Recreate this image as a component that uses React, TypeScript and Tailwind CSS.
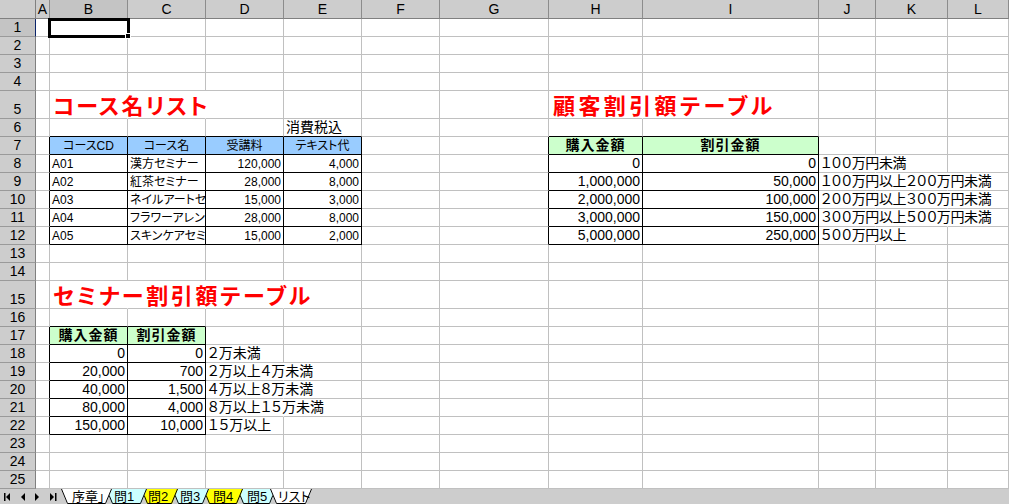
import React from "react";

type Kind = "title" | "title2" | "title3" | "small" | "smallhdr" | "norm" | "desc" | "bhdr";
type Cell = { t: string; a: "l" | "r" | "c"; k: Kind };

const LETTERS = ["", "A", "B", "C", "D", "E", "F", "G", "H", "I", "J", "K", "L"];
const ROW_COUNT = 25;

const data: Record<string, Cell> = {};
function put(r: number, c: number, t: string, a: "l" | "r" | "c", k: Kind) {
  data[`${r},${c}`] = { t, a, k };
}

put(5, 2, "コース名リスト", "l", "title");
put(5, 8, "顧客割引額テーブル", "l", "title2");
put(6, 5, "消費税込", "l", "norm");
put(7, 2, "コースCD", "c", "smallhdr");
put(7, 3, "コース名", "c", "smallhdr");
put(7, 4, "受講料", "c", "smallhdr");
put(7, 5, "テキスト代", "c", "smallhdr");
put(7, 8, "購入金額", "c", "bhdr");
put(7, 9, "割引金額", "c", "bhdr");

const courses = [
  ["A01", "漢方セミナー", "120,000", "4,000"],
  ["A02", "紅茶セミナー", "28,000", "8,000"],
  ["A03", "ネイルアートセ", "15,000", "3,000"],
  ["A04", "フラワーアレン", "28,000", "8,000"],
  ["A05", "スキンケアセミ", "15,000", "2,000"],
];
courses.forEach((row, i) => {
  put(8 + i, 2, row[0], "l", "small");
  put(8 + i, 3, row[1], "l", "small");
  put(8 + i, 4, row[2], "r", "small");
  put(8 + i, 5, row[3], "r", "small");
});

const customer = [
  ["0", "0", "１００万円未満"],
  ["1,000,000", "50,000", "１００万円以上２００万円未満"],
  ["2,000,000", "100,000", "２００万円以上３００万円未満"],
  ["3,000,000", "150,000", "３００万円以上５００万円未満"],
  ["5,000,000", "250,000", "５００万円以上"],
];
customer.forEach((row, i) => {
  put(8 + i, 8, row[0], "r", "norm");
  put(8 + i, 9, row[1], "r", "norm");
  put(8 + i, 10, row[2], "l", "desc");
});

put(15, 2, "セミナー割引額テーブル", "l", "title3");
put(17, 2, "購入金額", "c", "bhdr");
put(17, 3, "割引金額", "c", "bhdr");
const seminar = [
  ["0", "0", "２万未満"],
  ["20,000", "700", "２万以上４万未満"],
  ["40,000", "1,500", "４万以上８万未満"],
  ["80,000", "4,000", "８万以上１５万未満"],
  ["150,000", "10,000", "１５万以上"],
];
seminar.forEach((row, i) => {
  put(18 + i, 2, row[0], "r", "norm");
  put(18 + i, 3, row[1], "r", "norm");
  put(18 + i, 4, row[2], "l", "norm");
});

const tables: [number, number, number, number][] = [
  [7, 12, 2, 5],
  [7, 12, 8, 9],
  [17, 22, 2, 3],
];
const inT = (r: number, c: number) =>
  tables.some(([r0, r1, c0, c1]) => r >= r0 && r <= r1 && c >= c0 && c <= c1);

const hidden = new Set([
  "5,2", "5,3", "5,8",
  "8,10", "9,10", "9,11", "10,10", "10,11", "11,10", "11,11", "12,10",
  "15,2", "15,3", "15,4",
  "19,4", "20,4", "21,4",
]);

const clipped = new Set(["10,3", "11,3", "12,3"]);

function bgOf(r: number, c: number) {
  if (r === 7 && c >= 2 && c <= 5) return "bg-[#99ccff]";
  if ((r === 7 && (c === 8 || c === 9)) || (r === 17 && (c === 2 || c === 3))) return "bg-[#ccffcc]";
  return "";
}

function kindClass(k: Kind) {
  switch (k) {
    case "title":
      return "pl-[1px] text-[22px] leading-[22px] font-bold text-[#ff0000] tracking-[2px]";
    case "title2":
      return "pl-[2px] text-[22px] leading-[22px] font-bold text-[#ff0000] tracking-[3.4px]";
    case "title3":
      return "pl-[1px] text-[22px] leading-[22px] font-bold text-[#ff0000] tracking-[2.7px]";
    case "small":
      return "text-[12px] leading-[12px] pb-[2px]";
    case "smallhdr":
      return "text-[12px] leading-[12px] pb-[2px]";
    case "bhdr":
      return "text-[14px] leading-[14px] font-bold tracking-[1px] pb-[2px]";
    case "desc":
      return "text-[14px] leading-[14px] tracking-[-0.4px] pb-[2px]";
    default:
      return "text-[14px] leading-[14px] pb-[2px]";
  }
}

function DataCell({ r, c }: { r: number; c: number }) {
  const key = `${r},${c}`;
  const cell = data[key];
  const right = inT(r, c) || inT(r, c + 1)
    ? "border-r-black"
    : hidden.has(key)
    ? "border-r-transparent"
    : "border-r-[#c0c0c0]";
  const bottom = inT(r, c) || inT(r + 1, c) ? "border-b-black" : "border-b-[#c0c0c0]";
  const justify = !cell ? "" : cell.a === "l" ? "justify-start pl-[2px]" : cell.a === "r" ? "justify-end pr-[2px]" : "justify-center";
  return (
    <div
      className={`relative flex items-end border-r border-b ${right} ${bottom} ${bgOf(r, c)} ${justify} ${
        clipped.has(key) ? "overflow-hidden" : ""
      }`}
    >
      {cell && (
        <span className={`relative z-10 whitespace-nowrap ${kindClass(cell.k)}`}>{cell.t}</span>
      )}
      {r === 1 && c === 2 && (
        <>
          <div className="pointer-events-none absolute left-[-2px] top-[-1px] z-20 h-[20px] w-[82px] border-[3px] border-black" />
          <div className="pointer-events-none absolute left-[75px] top-[14px] z-30 h-[6px] w-[6px] border border-white bg-black" />
        </>
      )}
    </div>
  );
}

function ColHeader({ c }: { c: number }) {
  const sel = c === 2;
  return (
    <div
      className={`flex items-end justify-center border-r border-b border-r-[#8c8c8c] pb-[2px] text-[14px] leading-[14px] ${
        sel ? "border-b-[#0a246a] bg-[#c4c4c4]" : "border-b-[#808080] bg-[#cdcdcd]"
      }`}
    >
      {LETTERS[c]}
    </div>
  );
}

function RowHeader({ r }: { r: number }) {
  const sel = r === 1;
  return (
    <div
      className={`flex items-end justify-center border-r border-b border-b-[#9a9a9a] pb-[2px] text-[14px] leading-[14px] ${
        sel ? "border-r-[#0a246a] bg-[#c4c4c4]" : "border-r-[#808080] bg-[#cdcdcd]"
      }`}
    >
      {r}
    </div>
  );
}

function Tab({
  label,
  w,
  fill,
  cls,
  textCls,
}: {
  label: string;
  w: number;
  fill: string;
  cls: string;
  textCls: string;
}) {
  return (
    <div className={`relative h-[15px] shrink-0 ${cls}`}>
      <svg className="absolute inset-0" width={w} height={15} viewBox={`0 0 ${w} 15`}>
        <polygon points={`0,0 ${w},0 ${w - 6},15 6,15`} fill={fill} />
        <polyline
          points={`0.5,0 6.5,14.5 ${w - 6.5},14.5 ${w - 0.5},0`}
          fill="none"
          stroke="#000"
          strokeWidth={1}
        />
      </svg>
      <span className={`absolute top-[1px] whitespace-nowrap text-[13px] leading-[13px] ${textCls}`}>{label}</span>
    </div>
  );
}

export default function App() {
  const rows = Array.from({ length: ROW_COUNT }, (_, i) => i + 1);
  const cols = Array.from({ length: 12 }, (_, i) => i + 1);
  return (
    <div className="flex h-[504px] w-[1009px] flex-col overflow-hidden bg-white font-['Liberation_Sans','Noto_Sans_CJK_JP',sans-serif] text-black [font-feature-settings:'palt']">
      <div className="grid shrink-0 grid-cols-[36px_14px_78px_78px_78px_78px_78px_109px_94px_176px_57px_72px_61px] grid-rows-[19px_18px_18px_18px_18px_28px_18px_18px_18px_18px_18px_18px_18px_18px_18px_28px_18px_18px_18px_18px_18px_18px_18px_18px_18px_18px]">
        <div className="border-r border-b border-r-[#808080] border-b-[#808080] bg-[#cdcdcd]" />
        {cols.map((c) => (
          <ColHeader key={`h${c}`} c={c} />
        ))}
        {rows.map((r) => (
          <React.Fragment key={r}>
            <RowHeader r={r} />
            {cols.map((c) => (
              <DataCell key={`${r},${c}`} r={r} c={c} />
            ))}
          </React.Fragment>
        ))}
      </div>
      <div className="flex h-[15px] shrink-0 items-start bg-[#cdcdcd]">
        <div className="flex h-[15px] w-[61px] shrink-0 items-center">
          <svg width="61" height="15" viewBox="0 0 61 15">
            <rect x="4" y="4" width="1.5" height="8" fill="#000" />
            <polygon points="10,4 10,12 6,8" fill="#000" />
            <polygon points="25,4 25,12 21,8" fill="#000" />
            <polygon points="35,4 35,12 39,8" fill="#000" />
            <polygon points="50,4 50,12 54,8" fill="#000" />
            <rect x="55" y="4" width="1.5" height="8" fill="#000" />
          </svg>
        </div>
        <Tab label="序章」" w={51} fill="#ffffff" cls="z-[7] w-[51px]" textCls="left-[11px]" />
        <Tab label="問1" w={41} fill="#ccffff" cls="z-[6] -ml-[6px] w-[41px]" textCls="left-[8px]" />
        <Tab label="問2" w={37} fill="#ffff00" cls="z-[5] -ml-[6px] w-[37px]" textCls="left-[7px]" />
        <Tab label="問3" w={37} fill="#ccffff" cls="z-[4] -ml-[6px] w-[37px]" textCls="left-[8px]" />
        <Tab label="問4" w={40} fill="#ffff00" cls="z-[3] -ml-[6px] w-[40px]" textCls="left-[10px]" />
        <Tab label="問5" w={39} fill="#ccffff" cls="z-[2] -ml-[6px] w-[39px]" textCls="left-[10px]" />
        <Tab label="リスト" w={42} fill="#ffffff" cls="z-[8] -ml-[6px] w-[42px]" textCls="left-[8px]" />
      </div>
    </div>
  );
}
